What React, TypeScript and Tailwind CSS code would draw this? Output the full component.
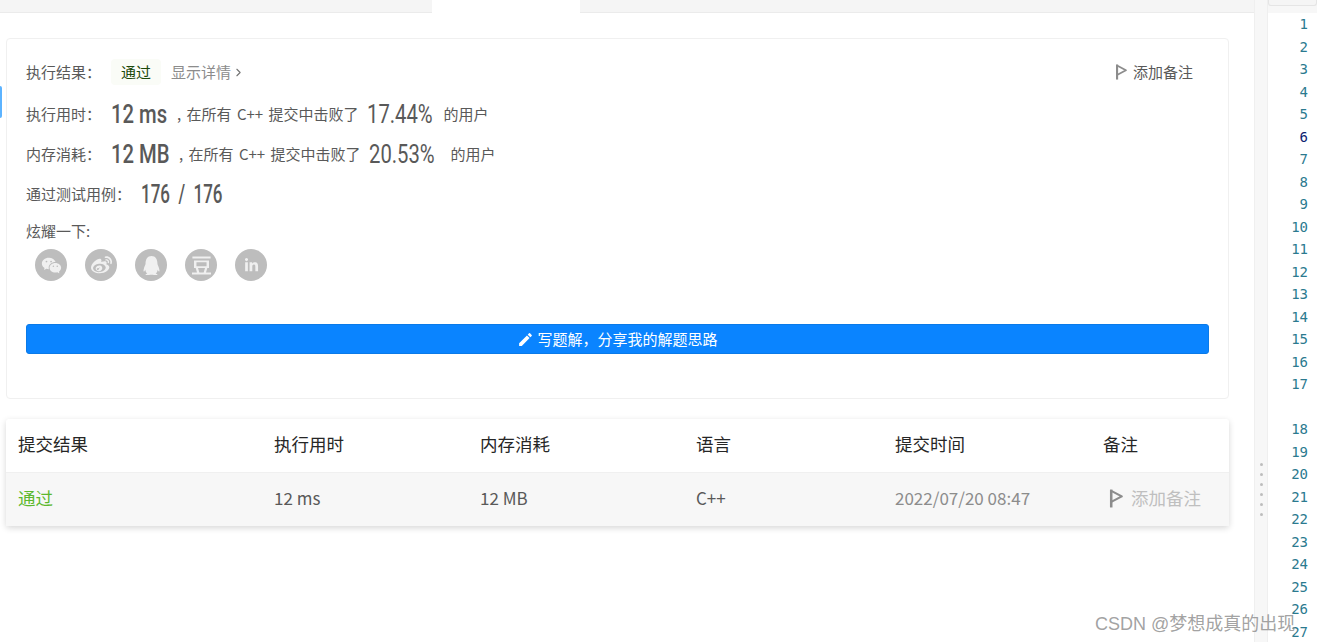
import React from 'react';
import { ChevronRight } from 'lucide-react';
import { FaQq, FaWeibo, FaLinkedinIn } from 'react-icons/fa';
import { RiWechatFill } from 'react-icons/ri';
import { SiDouban } from 'react-icons/si';
import { MdEdit } from 'react-icons/md';

const cjk = "font-['Noto_Sans_CJK_SC','Noto_Sans',sans-serif]";

const Flag = ({ className }: { className: string }) => (
  <svg viewBox="0 0 14 18" className={className} fill="none" stroke="currentColor">
    <path d="M2 0.5v17" strokeWidth="2.4" />
    <path d="M2.5 2 L12 7 L2.5 12" strokeWidth="2" strokeLinejoin="round" />
  </svg>
);

// condensed numerals: no DIN-like font is installed, so Roboto is squeezed sideways
const Num = ({ children, className = '', squeeze = 'scale-x-[0.81]' }: { children: React.ReactNode; className?: string; squeeze?: string }) => (
  <span className={`shrink-0 whitespace-nowrap font-['Roboto',sans-serif] text-[25px] leading-none text-[#595959] ${className}`}>
    <span className={`inline-block origin-left ${squeeze}`}>{children}</span>
  </span>
);

const Stat = ({ label, value, valueWidth, pct, pctWidth }: { label: string; value: string; valueWidth: string; pct: string; pctWidth: string }) => (
  <div className="flex items-center h-[24px] mt-[16px]">
    <span className="w-[85px] text-[15px] text-[#595959]">{label}</span>
    <Num className={`font-medium ${valueWidth}`}>{value}</Num>
    <span className="text-[15px] text-[#595959] whitespace-nowrap [word-spacing:2px]">, 在所有 C++ 提交中击败了</span>
    <Num className={`ml-[9px] ${pctWidth}`}>{pct}</Num>
    <span className="text-[15px] text-[#595959]">的用户</span>
  </div>
);

const lineNumbers = [1, 2, 3, 4, 5, 6, 7, 8, 9, 10, 11, 12, 13, 14, 15, 16, 17, 0, 18, 19, 20, 21, 22, 23, 24, 25, 26, 27];

export default function App() {
  return (
    <div className={`relative flex h-screen w-full overflow-hidden bg-white ${cjk}`}>
      <div className="w-[1254px] shrink-0 flex flex-col">
        <div className="flex h-[13px] shrink-0">
          <div className="w-[432px] bg-[#f5f5f5] border-b border-[#ebebeb]" />
          <div className="w-[148px] bg-white" />
          <div className="flex-1 bg-[#f5f5f5] border-b border-[#ebebeb]" />
        </div>

        <div className="relative pl-[6px] pr-[25px] pt-[25px]">
          <div className="absolute left-0 top-[73px] w-[2px] h-[32px] bg-[#5cb3ff] rounded-r-sm" />
          <div className="h-[361px] border border-[#f0f0f0] rounded-[4px] pl-[19px] pr-[19px] pt-[22px]">
            <div className="flex items-center h-[22px]">
              <span className="w-[85px] text-[15px] text-[#595959]">执行结果：</span>
              <span className="w-[50px] h-[26px] flex items-center justify-center rounded-[4px] bg-[#fafcf7] text-[15px] text-[#1c4a0b]">通过</span>
              <span className="ml-[10px] text-[15px] text-[#8c8c8c]">显示详情</span>
              <ChevronRight className="w-[13px] h-[13px] text-[#737373] ml-[1px]" />
              <div className="ml-auto mr-[16px] flex items-center text-[15px] text-[#595959]">
                <Flag className="w-[13px] h-[16px] text-[#8c8c8c] mr-[5px]" />
                添加备注
              </div>
            </div>
            <div className="h-[3px]" />
            <Stat label="执行用时：" value="12 ms" valueWidth="w-[66px]" pct="17.44%" pctWidth="w-[76px]" />
            <Stat label="内存消耗：" value="12 MB" valueWidth="w-[68px]" pct="20.53%" pctWidth="w-[81px]" />
            <div className="flex items-center h-[24px] mt-[16px]">
              <span className="w-[115px] text-[15px] text-[#595959]">通过测试用例：</span>
              <Num className="font-medium" squeeze="scale-x-[0.68]">176 &nbsp;/&nbsp; 176</Num>
            </div>
            <div className="mt-[15px] h-[20px] flex items-center text-[15px] text-[#595959]">炫耀一下:</div>
            <div className="flex gap-[18px] ml-[9px] mt-[8px]">
              {[
                <RiWechatFill key="wx" className="w-[21px] h-[21px]" />,
                <FaWeibo key="wb" className="w-[21px] h-[21px]" />,
                <FaQq key="qq" className="w-[19px] h-[19px]" />,
                <SiDouban key="db" className="w-[19px] h-[19px]" />,
                <FaLinkedinIn key="in" className="w-[15px] h-[15px]" />,
              ].map((icon) => (
                <div key={icon.key} className="w-[32px] h-[32px] rounded-full bg-[#bdbdbd] flex items-center justify-center text-[#f0f0f0]">
                  {icon}
                </div>
              ))}
            </div>
            <button className="mt-[43px] w-full h-[30px] bg-[#0a84ff] border border-[#0a7ae8] rounded-[3px] text-white text-[15px] flex items-center justify-center">
              <MdEdit className="w-[17px] h-[17px] mr-[3px]" />
              写题解，分享我的解题思路
            </button>
          </div>
        </div>

        <div className="ml-[6px] mr-[25px] mt-[20px] rounded-[3px] shadow-[0_2px_6px_rgba(0,0,0,0.16)] text-[17.5px]">
          <div className="grid grid-cols-[256px_206px_216px_199px_208px_1fr] h-[53px] items-center pl-[12px] pb-[2px] text-[#262626]">
            <span>提交结果</span>
            <span>执行用时</span>
            <span>内存消耗</span>
            <span>语言</span>
            <span>提交时间</span>
            <span>备注</span>
          </div>
          <div className="grid grid-cols-[256px_206px_216px_199px_208px_1fr] h-[54px] items-center pl-[12px] pb-[3px] bg-[#f7f7f7] border-t border-[#f0f0f0] text-[#595959]">
            <span className="text-[#5cb82e]">通过</span>
            <span className="text-[17px]">12 ms</span>
            <span className="text-[17px]">12 MB</span>
            <span className="text-[17px]">C++</span>
            <span className="text-[17px] text-[#8c8c8c]">2022/07/20 08:47</span>
            <span className="flex items-center text-[#bfbfbf] ml-[6px]">
              <Flag className="w-[15px] h-[19px] text-[#8c8c8c] mr-[7px]" />
              添加备注
            </span>
          </div>
        </div>
      </div>

      <div className="w-[14px] shrink-0 flex flex-col">
        <div className="flex-1 bg-[#f7f7f7] border-l border-r border-[#efefef] flex flex-col items-center gap-[7px] pt-[463px]">
          {[0, 1, 2, 3, 4, 5].map((i) => (
            <div key={i} className="w-[3px] h-[3px] rounded-full bg-[#bdbdbd]" />
          ))}
        </div>
      </div>

      <div className="flex-1 flex flex-col">
        <div className="h-[6px] bg-[#f5f5f5] shrink-0">
          <div className="h-[6px] border border-t-0 border-[#e5e5e5] rounded-b-[3px] w-full" />
        </div>
        <div className="h-[7px] bg-[#f7f7f7] shrink-0" />
        <div className="pr-[9px] text-right font-['DejaVu_Sans_Mono',monospace] text-[14px] leading-[22.5px] text-[#2b7a8f]">
          {lineNumbers.map((n, i) => (
            <div key={i} className={`h-[22.5px] ${n === 6 ? 'text-[#0b216f]' : ''}`}>
              {n || ''}
            </div>
          ))}
        </div>
      </div>

      <div className="absolute left-[1095px] top-[612px] text-[18px] leading-[24px] text-[#8a8a8a]/80 whitespace-nowrap font-['Liberation_Sans','Noto_Sans_CJK_SC',sans-serif]">
        CSDN @梦想成真的出现
      </div>
    </div>
  );
}
